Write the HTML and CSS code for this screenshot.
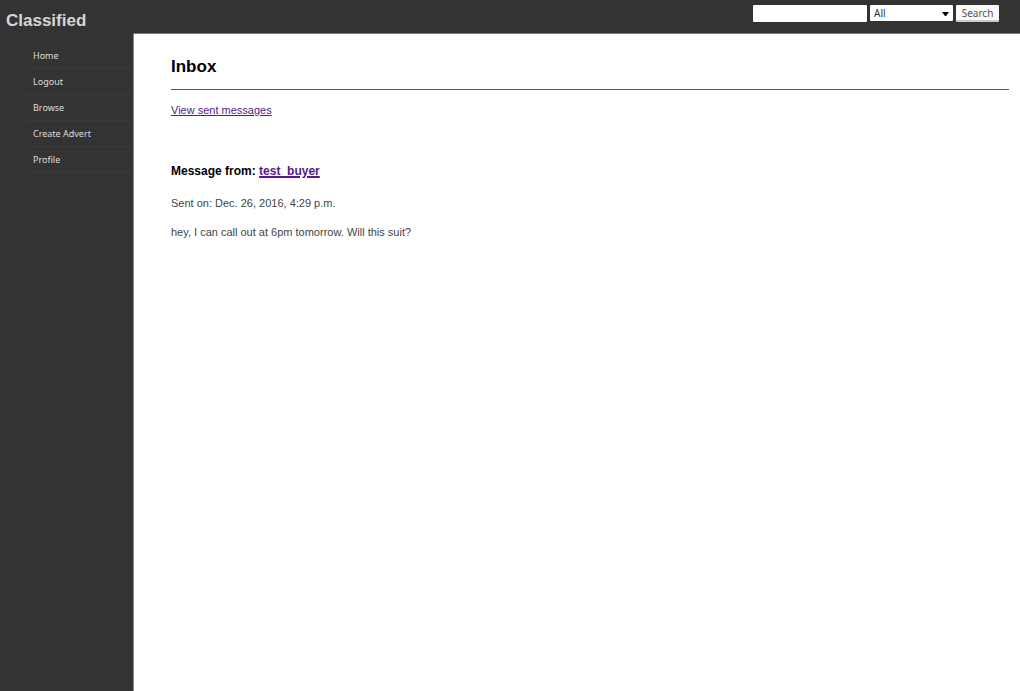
FILE: index.html
```html
<!DOCTYPE html>
<html lang="en">
<head>
<meta charset="utf-8">
<title>Inbox - Classified</title>
<link rel="stylesheet" href="styles.css">
</head>
<body>
<header class="topbar">
  <div class="brand">Classified</div>
  <form class="search">
    <input class="search-text" type="text" aria-label="Search text">
    <div class="select-wrap">
      <select class="search-select" aria-label="Category"><option>All</option></select>
      <svg class="select-arrow" width="7" height="4" viewBox="0 0 7 4" aria-hidden="true"><path d="M0 0h7L4 4H3z" fill="#000"/></svg>
    </div>
    <button class="search-button" type="submit">Search</button>
  </form>
</header>
<div class="layout">
  <nav class="sidebar">
    <ul class="menu">
      <li class="menu-item"><a href="#">Home</a></li>
      <li class="menu-item"><a href="#">Logout</a></li>
      <li class="menu-item"><a href="#">Browse</a></li>
      <li class="menu-item"><a href="#">Create Advert</a></li>
      <li class="menu-item"><a href="#">Profile</a></li>
    </ul>
  </nav>
  <main class="content">
    <h1 class="title">Inbox</h1>
    <p class="sent-link"><a href="#">View sent messages</a></p>
    <article class="message">
      <h2 class="message-from">Message from: <a href="#">test_buyer</a></h2>
      <p class="message-line">Sent on: Dec. 26, 2016, 4:29 p.m.</p>
      <p class="message-line">hey, I can call out at 6pm tomorrow. Will this suit?</p>
    </article>
  </main>
</div>
</body>
</html>
```
FILE: styles.css
```css
* { box-sizing: border-box; }
body {
  margin: 0;
  min-height: 100vh;
  display: flex;
  flex-direction: column;
  background: #333;
  color: #444;
  font: 11px/16px "Liberation Sans", Arial, sans-serif;
}
.topbar {
  display: flex;
  justify-content: space-between;
  align-items: flex-start;
  height: 33px;
  padding: 5px 21px 0 6px;
}
.brand {
  padding-top: 6px;
  color: #d6d6d6;
  font-size: 17px;
  line-height: 20px;
  font-weight: bold;
}
.search {
  display: flex;
  gap: 3px;
  font: 10px/16px "Noto Sans", sans-serif;
}
.search-text, .search-select, .search-button {
  margin: 0;
  padding: 0 4px;
  height: 17px;
  border: 0;
  border-radius: 1px;
  background: #fff;
  color: #333;
  font: inherit;
}
.search-text { width: 114px; }
.select-wrap { position: relative; }
.search-select {
  display: block;
  width: 83px;
  height: 16px;
  appearance: none;
}
.select-arrow { position: absolute; right: 4px; top: 7px; }
.search-button {
  width: 43px;
  padding: 0;
  background: #fafafa;
  border-bottom: 2px solid #ccc;
  color: #555;
}
.layout { display: flex; flex: 1; }
.sidebar { width: 133px; }
.menu {
  margin: 0;
  padding: 10px 0 0 25px;
  list-style: none;
}
.menu-item {
  height: 26px;
  padding: 4px 8px;
  border-bottom: 1px solid #393939;
  font: 9px/17px "Noto Sans", sans-serif;
}
.menu-item a { color: #ddd; text-decoration: none; }
.content {
  flex: 1;
  padding: 22px 11px 0 37px;
  border-top: 1px solid #777;
  border-left: 1px solid #888;
  background: #fff;
}
.title {
  margin: 0;
  padding-bottom: 11px;
  border-bottom: 1px solid #555;
  color: #000;
  font-size: 17px;
  line-height: 22px;
}
.content a { color: #551a8b; }
.sent-link { margin: 12px 0 45px; }
.message-from {
  margin: 0 0 16px;
  color: #000;
  font-size: 12px;
  line-height: 16px;
}
.message-from a {
  text-decoration-thickness: 2px;
}
.message-line { margin: 0 0 13px; }
```
